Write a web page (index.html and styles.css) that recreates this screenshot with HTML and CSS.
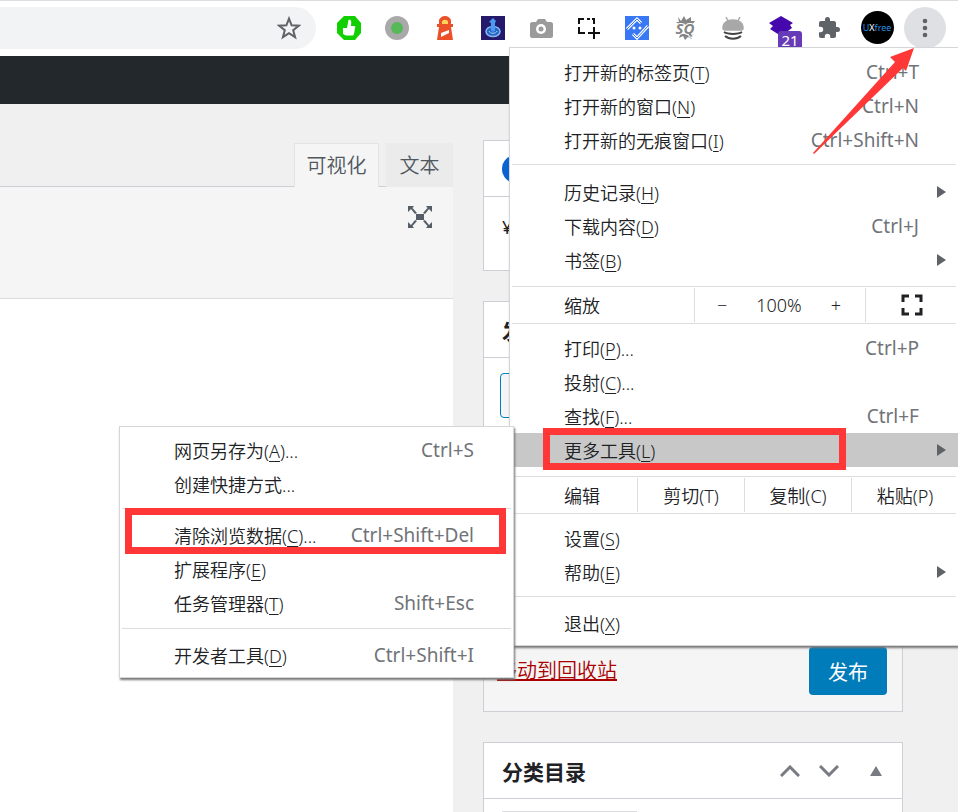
FILE: index.html
```
<!DOCTYPE html>
<html lang="zh-CN">
<head>
  <meta charset="UTF-8" />
  <meta name="viewport" content="width=device-width, initial-scale=1.0"/>
  <title>编辑文章</title>
  <link rel="stylesheet" href="styles.css">
</head>
<body>
  <header class="toolbar">
    <div class="address">
      <button class="star" aria-label="收藏">
        <svg width="24" height="24" viewBox="0 0 24 24"><path d="M12 2.600 14.600 9.300 21.800 9.700 16.200 14.200 18.100 21.200 12 17.200 5.900 21.200 7.800 14.200 2.200 9.700 9.400 9.300z" fill="none" stroke="#5f6368" stroke-width="2"/></svg>
      </button>
    </div>
    <button class="ext" aria-label="点赞">
      <svg width="24" height="24" viewBox="0 0 24 24"><path d="M7 0h11l6 7v10l-6 7H7l-7-7V7z" fill="#12cf00"/><path d="M6 12h4l1.500-8c3-1 3 2 2.500 6h3.500c1 0 1 1 .5 2l-1 6c-.4 1.200-1 1.500-2 1.500H9L6 18z" fill="#fff"/></svg>
    </button>
    <button class="ext" aria-label="状态">
      <svg width="24" height="24" viewBox="0 0 24 24"><circle cx="12" cy="12" r="12" fill="#a9a9a9"/><circle cx="12" cy="12" r="6" fill="#55b957"/></svg>
    </button>
    <button class="ext" aria-label="Lighthouse">
      <svg width="24" height="24" viewBox="0 0 24 24"><path d="M12 0c3 0 5 2 6 4v4h2v3h-2l2 13H4L6 11H4V8h2V4c1-2 3-4 6-4z" fill="#eb5029"/><path d="M9 8V6c0-3 6-3 6 0v2z" fill="#ffd25a"/><path d="M8 17l8-3v3l-8 4z" fill="#fff"/></svg>
    </button>
    <button class="ext" aria-label="触控">
      <svg width="24" height="24" viewBox="0 0 24 24"><path d="M0 0h24v24H0z" fill="#24196b"/><ellipse cx="12" cy="15.500" rx="7" ry="5" fill="#2667c8" stroke="#86b9ee" stroke-width="1.500"/><path d="M10 14V7L8 6l4-4 3 3-1 2v7c0 2-4 2-4 0z" fill="#4b9cf0"/><path d="M8 15c1 3 7 3 8 0" fill="none" stroke="#a8d2f8"/></svg>
    </button>
    <button class="ext" aria-label="相机">
      <svg width="24" height="24" viewBox="0 0 24 24"><path d="M3 6h4l2-3h7l2 3h4c1 0 2 1 2 2v12c0 1-1 2-2 2H3c-1 0-2-1-2-2V8c0-1 1-2 2-2z" fill="#9b9b9b"/><circle cx="12" cy="13" r="5" fill="#fff"/><circle cx="12" cy="13" r="2.500" fill="#9b9b9b"/></svg>
    </button>
    <button class="ext" aria-label="截取区域">
      <svg width="24" height="24" viewBox="0 0 24 24"><path d="M2 8V3h5M10 3h3M17 8V3h-2M2 11v6h6M17 11v12M11 17h12" fill="none" stroke="#111" stroke-width="2"/></svg>
    </button>
    <button class="ext" aria-label="检查">
      <svg width="24" height="24" viewBox="0 0 24 24"><path d="M0 0h24v24H0z" fill="#3978f4"/><path d="M2 13 12 3l4 4M8 18l4 4 11-12" fill="none" stroke="#fff" stroke-width="3"/><path d="M2 13 12 3l4 4M8 18l4 4 11-12" fill="none" stroke="#3978f4" stroke-width="1"/><circle cx="9" cy="12" r="1.500" fill="#fff"/><circle cx="15" cy="12" r="1.500" fill="#fff"/></svg>
    </button>
    <button class="ext" aria-label="SQ">
      <svg width="24" height="24" viewBox="0 0 24 24"><path d="M5 1l3 4 3-5 2 4 5-3v4l4 0-3 4H7L3 6l3 0zM3 18h18l-4 1 2 4-4-2-3 3-2-4-4 2 1-3z" fill="#858585"/><text class="sq-text" x="12" y="18" text-anchor="middle">SQ</text></svg>
    </button>
    <button class="ext" aria-label="抓取">
      <svg width="24" height="24" viewBox="0 0 24 24"><path d="M2 12c0-5 4-8 10-8s10 3 10 8c0 1-1 2-2 2H4c-1 0-2-1-2-2zM7 5 5 1M17 5l2-4" fill="#a8a8a8" stroke="#a8a8a8" stroke-width="1.500"/><path d="M3 16c4 2.500 14 2.500 18 0M4 20c4 3.500 12 3.500 16 0" fill="none" stroke="#444" stroke-width="2"/></svg>
    </button>
    <button class="ext" aria-label="图层">
      <svg width="24" height="24" viewBox="0 0 24 24"><path d="M12 0l12 7-3 2 2 3-11 8-11-7 3-3-4-3z" fill="#4408ad"/></svg>
      <span class="badge">21</span>
    </button>
    <button class="ext" aria-label="扩展程序">
      <svg width="24" height="24" viewBox="0 0 24 24"><path d="M20.500 11H19V7c0-1.100-.9-2-2-2h-4V3.500a2.500 2.500 0 0 0-5 0V5H4c-1.100 0-2 .9-2 2v3.800h1.500a2.700 2.700 0 0 1 0 5.400H2V20c0 1.100.9 2 2 2h3.800v-1.500a2.700 2.700 0 0 1 5.400 0V22H17c1.100 0 2-.9 2-2v-4h1.500a2.500 2.500 0 0 0 0-5z" fill="#5f6368"/></svg>
    </button>
    <button class="ext" aria-label="用户">
      <span class="avatar"><span class="ux">U</span><span class="xx">X</span><span class="ux">free</span></span>
    </button>
    <button class="ext" aria-label="菜单">
      <span class="more"><svg width="6" height="20" viewBox="0 0 6 20"><g fill="#5f6368"><circle cx="3" cy="3" r="2.300"/><circle cx="3" cy="10" r="2.300"/><circle cx="3" cy="17" r="2.300"/></g></svg></span>
    </button>
  </header>

  <div class="admin-bar"></div>

  <main class="content">
    <section class="editor">
      <div class="tabs">
        <button class="tab active">可视化</button>
        <button class="tab">文本</button>
      </div>
      <div class="editor-tools">
        <button class="expand" aria-label="全屏">
          <svg width="26" height="22" viewBox="0 0 26 22"><path d="M9 8h8v6H9zM1 0h6L5.500 2 10 7l-2 1-4-5-3 3zM25 0h-6l1.500 2L16 7l2 1 4-5 3 3zM1 22h6l-1.500-2 4.500-5-2-1-4 5-3-3zM25 22h-6l1.500-2-4.500-5 2-1 4 5 3-3z" fill="#555d66"/></svg>
        </button>
      </div>
      <div class="editor-body"></div>
    </section>

    <aside class="side">
      <section class="box box-seo">
        <div class="box-head"><span class="dot"></span></div>
        <p class="price">¥</p>
      </section>

      <section class="box box-publish">
        <h2 class="box-head">发布</h2>
        <div class="box-body"><button class="draft" aria-label="保存草稿"></button></div>
        <div class="box-foot">
          <a class="trash" href="#trash">移动到回收站</a>
          <button class="publish">发布</button>
        </div>
      </section>

      <section class="box box-cats">
        <h2 class="box-head">分类目录
          <span class="handles">
            <svg width="20" height="12" viewBox="0 0 20 12"><path d="M1 11l9-9 9 9" fill="none" stroke="#787c82" stroke-width="3"/></svg>
            <svg width="20" height="12" viewBox="0 0 20 12"><path d="M1 1l9 9 9-9" fill="none" stroke="#787c82" stroke-width="3"/></svg>
            <svg class="toggle" width="12" height="10" viewBox="0 0 12 10"><path d="M6 0l6 10H0z" fill="#787c82"/></svg>
          </span>
        </h2>
        <div class="cat-tab"></div>
      </section>
    </aside>
  </main>

  <nav class="menu main-menu">
    <div class="group">
      <button class="item"><span>打开新的标签页(<u>T</u>)</span><kbd>Ctrl+T</kbd></button>
      <button class="item"><span>打开新的窗口(<u>N</u>)</span><kbd>Ctrl+N</kbd></button>
      <button class="item"><span>打开新的无痕窗口(<u>I</u>)</span><kbd>Ctrl+Shift+N</kbd></button>
    </div>
    <hr>
    <div class="group loose">
      <button class="item has-sub"><span>历史记录(<u>H</u>)</span></button>
      <button class="item"><span>下载内容(<u>D</u>)</span><kbd>Ctrl+J</kbd></button>
      <button class="item has-sub"><span>书签(<u>B</u>)</span></button>
    </div>
    <hr>
    <div class="split">
      <span class="split-label">缩放</span>
      <div class="cell zoom">
        <button aria-label="缩小">−</button>
        <span>100%</span>
        <button aria-label="放大">+</button>
      </div>
      <button class="cell full" aria-label="全屏">
        <svg width="22" height="22" viewBox="0 0 22 22"><path d="M2 8V2h6M14 2h6v6M20 14v6h-6M8 20H2v-6" fill="none" stroke="#202124" stroke-width="3"/></svg>
      </button>
    </div>
    <hr>
    <div class="group tools">
      <button class="item"><span>打印(<u>P</u>)...</span><kbd>Ctrl+P</kbd></button>
      <button class="item"><span>投射(<u>C</u>)...</span></button>
      <button class="item"><span>查找(<u>F</u>)...</span><kbd>Ctrl+F</kbd></button>
      <div class="sub-wrap">
        <button class="item has-sub selected"><span>更多工具(<u>L</u>)</span></button>
        <span class="mark mark-tools"></span>
        <div class="menu sub-menu">
          <div class="group first">
            <button class="item"><span>网页另存为(<u>A</u>)...</span><kbd>Ctrl+S</kbd></button>
            <button class="item"><span>创建快捷方式...</span></button>
          </div>
          <hr>
          <div class="group middle">
            <div class="sub-wrap">
              <button class="item"><span>清除浏览数据(<u>C</u>)...</span><kbd>Ctrl+Shift+Del</kbd></button>
              <span class="mark mark-clear"></span>
            </div>
            <button class="item"><span>扩展程序(<u>E</u>)</span></button>
            <button class="item"><span>任务管理器(<u>T</u>)</span><kbd>Shift+Esc</kbd></button>
          </div>
          <hr>
          <div class="group last">
            <button class="item"><span>开发者工具(<u>D</u>)</span><kbd>Ctrl+Shift+I</kbd></button>
          </div>
        </div>
      </div>
    </div>
    <hr>
    <div class="split">
      <span class="split-label">编辑</span>
      <button class="cell edit">剪切(T)</button>
      <button class="cell edit">复制(C)</button>
      <button class="cell edit">粘贴(P)</button>
    </div>
    <hr>
    <div class="group">
      <button class="item"><span>设置(<u>S</u>)</span></button>
      <button class="item has-sub"><span>帮助(<u>E</u>)</span></button>
    </div>
    <hr>
    <div class="group last">
      <button class="item"><span>退出(<u>X</u>)</span></button>
    </div>
    <svg class="pointer" width="102" height="106" viewBox="0 0 102 106"><path d="M101 0 77 9l5 5L0 105l1 1L90 20l3 3z" fill="#ff3737"/></svg>
  </nav>
</body>
</html>
```

FILE: styles.css
```
* {
  box-sizing: border-box;
}

body {
  margin: 0;
  height: 100vh;
  display: flex;
  flex-direction: column;
  position: relative;
  overflow: hidden;
  font-family: "Noto Sans", "Noto Sans CJK SC", sans-serif;
  background: #f0f0f1;
  color: #202124;
}

button {
  border: none;
  background: none;
  padding: 0;
  font: inherit;
  color: inherit;
  cursor: pointer;
}

svg {
  display: block;
}

/* browser toolbar */
.toolbar {
  flex: none;
  display: flex;
  align-items: center;
  height: 56px;
  padding: 0 9px 2px 0;
  background: #fff;
  border-top: 1px solid #dadce0;
}

.address {
  flex: 1;
  display: flex;
  justify-content: flex-end;
  align-items: center;
  height: 42px;
  margin-right: 9px;
  padding-right: 15px;
  background: #f1f3f4;
  border-radius: 0 21px 21px 0;
}

.ext {
  width: 48px;
  height: 48px;
  display: flex;
  align-items: center;
  justify-content: center;
  position: relative;
}

.sq-text {
  font: italic bold 15px "Open Sans", sans-serif;
  fill: #858585;
  stroke: #fff;
  stroke-width: 2px;
  paint-order: stroke;
}

.badge {
  position: absolute;
  top: 27px;
  left: 21px;
  width: 24px;
  height: 20px;
  border-radius: 3px;
  background: #673ab7;
  color: #fff;
  font-size: 15px;
  line-height: 18px;
}

.avatar {
  width: 33px;
  height: 33px;
  border-radius: 50%;
  background: #000;
  font-size: 9px;
  line-height: 33px;
  text-align: center;
}

.ux {
  color: #2d8fe0;
}

.xx {
  color: #fff;
}

.more {
  flex: none;
  width: 42px;
  height: 42px;
  border-radius: 50%;
  background: #dfe0e3;
  display: flex;
  align-items: center;
  justify-content: center;
}

.admin-bar {
  flex: none;
  height: 48px;
  background: #23282d;
}

/* edit screen */
.content {
  flex: 1;
  min-height: 0;
  display: flex;
  gap: 30px;
  padding-right: 55px;
}

.editor {
  flex: 1;
  display: flex;
  flex-direction: column;
  padding-top: 39px;
}

.tabs {
  display: flex;
  justify-content: flex-end;
  gap: 7px;
  height: 44px;
  border-bottom: 1px solid #ccd0d4;
}

.tab {
  width: 67px;
  height: 44px;
  padding-bottom: 2px;
  font-size: 20px;
  font-weight: 350;
  color: #50575e;
  background: #ebebeb;
}

.tab.active {
  width: 85px;
  background: #f5f5f5;
  border: 1px solid #e2e3e5;
  border-bottom: none;
}

.editor-tools {
  height: 112px;
  padding: 19px 20px 0 0;
  display: flex;
  justify-content: flex-end;
  align-items: flex-start;
  background: #f5f5f5;
  border-bottom: 1px solid #dcdcde;
}

.editor-body {
  flex: 1;
  background: #fff;
}

.side {
  width: 420px;
  display: flex;
  flex-direction: column;
  gap: 30px;
  padding-top: 36px;
}

.box {
  flex: none;
  background: #fff;
  border: 1px solid #ccd0d4;
}

.box-head {
  display: flex;
  align-items: center;
  justify-content: space-between;
  height: 56px;
  margin: 0;
  padding: 0 20px 0 18px;
  border-bottom: 1px solid #ccd0d4;
  font-size: 21px;
  font-weight: bold;
}

.dot {
  width: 28px;
  height: 28px;
  border-radius: 50%;
  background: #0a63d1;
}

.box-seo {
  height: 131px;
}

.price {
  margin: 16px 18px;
  font-size: 18px;
  line-height: 28px;
}

.box-publish {
  display: flex;
  flex-direction: column;
  height: 411px;
}

.box-body {
  flex: 1;
  padding: 15px 16px;
}

.draft {
  width: 110px;
  height: 45px;
  border: 1px solid #007cba;
  border-radius: 4px;
  background: #f3f5f6;
}

.box-foot {
  display: flex;
  align-items: center;
  justify-content: space-between;
  padding: 16px 15px 16px 13px;
  background: #f5f5f5;
}

.trash {
  font-size: 20px;
  font-weight: 350;
  line-height: 28px;
  color: #a00;
}

.publish {
  width: 78px;
  height: 48px;
  border-radius: 4px;
  background: #007cba;
  color: #fff;
  font-size: 20px;
}

.box-cats {
  border-bottom: none;
}

.handles {
  display: flex;
  align-items: center;
  gap: 19px;
}

.toggle {
  margin-left: 12px;
}

.cat-tab {
  width: 135px;
  height: 20px;
  margin: 12px 18px;
  border: 1px solid #dcdcde;
}

/* drop-down menus */
.menu {
  position: absolute;
  background: #fff;
  border: 1px solid #d5d6da;
  box-shadow: 1px 2px 2px #777;
  font-size: 18px;
  font-weight: 350;
}

.main-menu {
  top: 47px;
  right: 0;
  width: 449px;
  border-right: none;
}

.sub-menu {
  top: -7px;
  right: calc(100% - 4px);
  width: 395px;
}

.menu hr {
  height: 1px;
  margin: 0 2px;
  border: none;
  background: #dcdde0;
}

.group {
  padding: 7px 0;
}

.loose {
  padding: 10px 0 9px;
}

.tools {
  padding-bottom: 9px;
}

.first {
  padding-top: 6px;
}

.middle {
  padding: 9px 0 8px;
}

.last {
  padding: 9px 0 5px;
}

.item {
  display: flex;
  align-items: center;
  justify-content: space-between;
  width: 100%;
  height: 34px;
  padding: 0 39px 0 54px;
  white-space: nowrap;
  text-align: left;
}

.item.has-sub {
  padding-right: 12px;
}

.has-sub::after {
  content: "";
  border: 6px solid transparent;
  border-left: 9px solid #5f6368;
  border-right: none;
}

.selected {
  background: #c8c8c9;
}

u {
  text-underline-offset: 3px;
  text-decoration-thickness: 1px;
}

kbd {
  font-family: inherit;
  font-size: 19px;
  font-weight: 400;
  color: #707378;
}

.split {
  display: flex;
  align-items: center;
  height: 36px;
}

.split-label {
  flex: 1;
  padding-left: 54px;
}

.cell {
  height: 34px;
  border-left: 1px solid #dcdde0;
}

.zoom {
  width: 171px;
  display: flex;
  align-items: center;
  justify-content: space-between;
  padding: 0 24px 0 22px;
}

.full {
  width: 93px;
  display: flex;
  align-items: center;
  justify-content: center;
}

.edit {
  width: 107px;
}

.sub-wrap {
  position: relative;
}

/* red highlights */
.mark {
  position: absolute;
  border: 7px solid #ff3737;
  pointer-events: none;
}

.mark-tools {
  top: -5px;
  bottom: -3px;
  left: 33px;
  right: 112px;
}

.mark-clear {
  top: -10px;
  bottom: -2px;
  left: 5px;
  right: 7px;
}

.pointer {
  position: absolute;
  top: 0;
  right: 43px;
  pointer-events: none;
}
```
